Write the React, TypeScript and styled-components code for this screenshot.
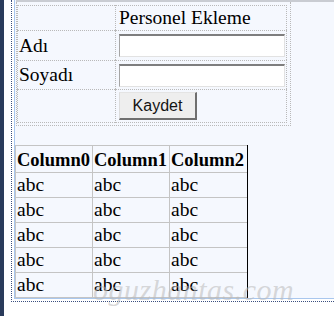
import React from "react";
import styled, { createGlobalStyle } from "styled-components";

const Global = createGlobalStyle`
  * { box-sizing: border-box; }
  html, body { margin: 0; padding: 0; background: #ffffff; }
  body {
    width: 334px;
    height: 316px;
    overflow: hidden;
    font-family: "Liberation Serif", "Times New Roman", serif;
    color: #000;
  }
`;

const Page = styled.div`
  position: relative;
  display: flex;
  width: 334px;
  height: 316px;
  overflow: hidden;
  background: #ffffff;
`;

const SideBar = styled.div`
  flex: none;
  width: 4px;
  height: 316px;
  background: #2a3b5b;
`;

const DesignFrame = styled.div`
  flex: 1;
  display: flex;
  height: 302px;
  margin-left: 7px;
  padding: 0 0 2px 2px;
  border-left: 1px dotted #3a4f80;
  border-bottom: 1px dotted #3a4f80;
`;

const Surface = styled.div`
  flex: 1;
  display: flex;
  flex-direction: column;
  align-items: flex-start;
  background: #f5f8fe;
  border-left: 1px solid #a9c7ee;
  border-bottom: 1px solid #a9c7ee;
`;

const TopRule = styled.div`
  align-self: stretch;
  height: 2px;
  margin-left: 1px;
  background: #c9ccd2;
`;

const FormTable = styled.div`
  margin-left: 1px;
  width: 275px;
  padding: 3px 3px 2px 0;
  border: 1px dotted #b9b9b9;
  border-top: none;
`;

const FormGrid = styled.div`
  display: grid;
  grid-template-columns: 98px 172px;
  grid-template-rows: 25px 30px 29px 34px;
`;

const Cell = styled.div<{ $last?: boolean; $bottom?: boolean; $pad?: number }>`
  display: flex;
  align-items: center;
  padding-left: ${(p) => p.$pad ?? 1}px;
  border-top: 1px dotted #b9b9b9;
  border-left: 1px dotted #b9b9b9;
  border-right: ${(p) => (p.$last ? "1px dotted #b9b9b9" : "none")};
  border-bottom: ${(p) => (p.$bottom ? "1px dotted #b9b9b9" : "none")};
  font-size: 19.5px;
  line-height: 22px;
  white-space: nowrap;
`;

const TextBox = styled.input`
  width: 166px;
  height: 23px;
  margin: 0;
  padding: 0 2px;
  background: #ffffff;
  border-style: solid;
  border-width: 2px 1px 1px 1px;
  border-color: #7e7e7e #e2e2e2 #e2e2e2 #a5a5a5;
  outline: none;
  font-family: "Liberation Sans", Arial, sans-serif;
  font-size: 14px;
`;

const Button = styled.button`
  width: 78px;
  height: 28px;
  margin: 0;
  padding: 0;
  background: #eeeeee;
  border-style: solid;
  border-width: 1px 2px 2px 1px;
  border-color: #e4e4e4 #6f6f6f #6f6f6f #dcdcdc;
  font-family: "Liberation Sans", Arial, sans-serif;
  font-size: 16px;
  color: #141414;
`;

const DataGrid = styled.div`
  margin-top: 19px;
  display: grid;
  grid-template-columns: 76px 76px 77px;
  grid-template-rows: 26px repeat(5, 24px);
  gap: 1px;
  padding: 1px 0 1px 1px;
  background: #c4c4c4;
  border-right: 1px solid #000000;
`;

const GridCell = styled.div<{ $head?: boolean }>`
  display: flex;
  align-items: center;
  padding: ${(p) => (p.$head ? "1px 0 0 1px" : "0 0 0 1px")};
  background: #f5f8fe;
  font-size: ${(p) => (p.$head ? "18.5px" : "19.5px")};
  font-weight: ${(p) => (p.$head ? 700 : 400)};
  line-height: 22px;
  white-space: nowrap;
  overflow: hidden;
`;

const Watermark = styled.div`
  position: absolute;
  left: 93px;
  top: 275px;
  font-family: "Liberation Serif", "Times New Roman", serif;
  font-style: italic;
  font-size: 30px;
  line-height: 30px;
  color: rgba(185, 185, 185, 0.55);
  letter-spacing: 0.5px;
  pointer-events: none;
`;

const columns = ["Column0", "Column1", "Column2"];
const rows = [0, 1, 2, 3, 4];

export default function App() {
  return (
    <>
      <Global />
      <Page>
        <SideBar />
        <DesignFrame>
          <Surface>
            <TopRule />
            <FormTable>
              <FormGrid>
                <Cell />
                <Cell $last $pad={3}>
                  Personel Ekleme
                </Cell>
                <Cell>Adı</Cell>
                <Cell $last $pad={3}>
                  <TextBox type="text" />
                </Cell>
                <Cell>Soyadı</Cell>
                <Cell $last $pad={3}>
                  <TextBox type="text" />
                </Cell>
                <Cell $bottom />
                <Cell $last $bottom $pad={3}>
                  <Button type="button">Kaydet</Button>
                </Cell>
              </FormGrid>
            </FormTable>
            <DataGrid>
              {columns.map((c) => (
                <GridCell key={c} $head>
                  {c}
                </GridCell>
              ))}
              {rows.map((r) =>
                columns.map((c) => <GridCell key={`${r}-${c}`}>abc</GridCell>)
              )}
            </DataGrid>
          </Surface>
        </DesignFrame>
        <Watermark>oguzhantas.com</Watermark>
      </Page>
    </>
  );
}
